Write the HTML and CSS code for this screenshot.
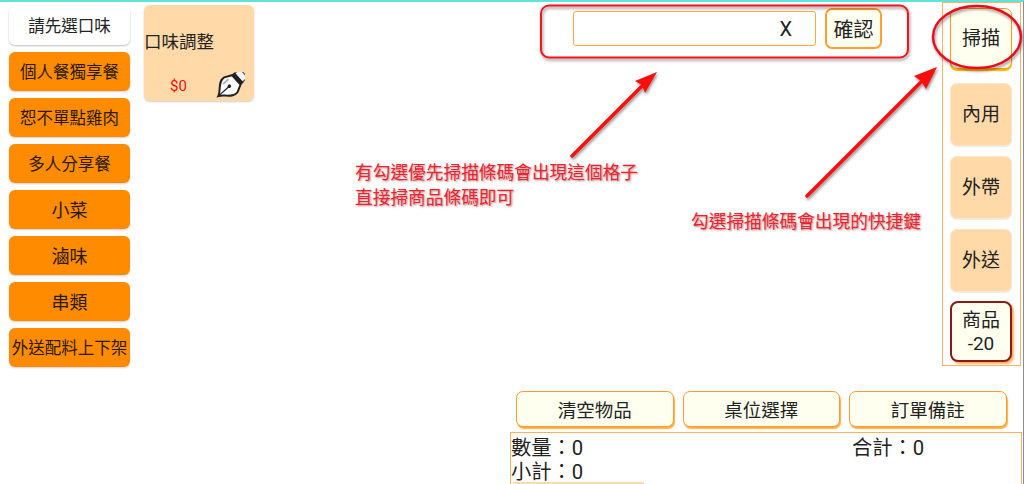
FILE: index.html
```html
<!DOCTYPE html>
<html lang="zh-Hant">
<head>
<meta charset="utf-8">
<title>點餐</title>
<link rel="stylesheet" href="styles.css">
</head>
<body>
<div class="page">
  <nav class="categories">
    <button class="cat cat-active">請先選口味</button>
    <button class="cat">個人餐獨享餐</button>
    <button class="cat">恕不單點雞肉</button>
    <button class="cat">多人分享餐</button>
    <button class="cat cat-big">小菜</button>
    <button class="cat cat-big">滷味</button>
    <button class="cat cat-big">串類</button>
    <button class="cat">外送配料上下架</button>
  </nav>

  <section class="products">
    <div class="card">
      <div class="card-name">口味調整</div>
      <div class="card-foot">
        <span class="card-price">$0</span>
        <svg class="pen" viewBox="0 0 30 28" width="30" height="28" aria-hidden="true">
          <g transform="translate(19 10) rotate(48) scale(1.05)">
            <rect x="-5.5" y="-12.5" width="11" height="7" rx="2" fill="#f4f4f4" stroke="#555" stroke-width="1.1"/>
            <rect x="-6.5" y="-6.5" width="13" height="3.5" fill="#222"/>
            <path d="M0 20 C-2 15 -11 11 -9.5 4 L-6 -3 L6 -3 L9.5 4 C11 11 2 15 0 20 Z" fill="#fff" stroke="#222" stroke-width="1.9"/>
            <path d="M0 19 L0 7" stroke="#222" stroke-width="1.2"/>
            <circle cx="0" cy="6" r="1.7" fill="#222"/>
            <path d="M-5.5 2 L-5.5 9" stroke="#aaa" stroke-width="1.6"/>
          </g>
        </svg>
      </div>
    </div>
  </section>

  <main class="main">
    <div class="top">
      <div class="scan">
        <div class="scan-input"><span class="scan-clear">X</span></div>
        <button class="scan-ok">確認</button>
      </div>
      <aside class="side">
        <button class="side-btn side-scan">掃描</button>
        <button class="side-btn">內用</button>
        <button class="side-btn">外帶</button>
        <button class="side-btn">外送</button>
        <button class="side-btn side-goods">商品<br>-20</button>
      </aside>
    </div>
    <div class="bottom">
      <div class="actions">
        <button class="action">清空物品</button>
        <button class="action">桌位選擇</button>
        <button class="action">訂單備註</button>
      </div>
      <div class="summary">
        <div class="summary-row"><span class="summary-qty">數量：0</span><span>合計：0</span></div>
        <div>小計：0</div>
        <div class="summary-next"></div>
      </div>
    </div>
  </main>

  <svg class="marks" width="1024" height="484" viewBox="0 0 1024 484" aria-hidden="true">
    <defs>
      <filter id="drop" x="-20%" y="-20%" width="140%" height="140%">
        <feDropShadow dx="1" dy="2" stdDeviation="1.5" flood-color="#000" flood-opacity="0.45"/>
      </filter>
    </defs>
    <g filter="url(#drop)">
      <rect x="541" y="5.5" width="367" height="52" rx="8" fill="none" stroke="#f0141e" stroke-width="2"/>
      <path d="M572 156 L648 80" stroke="#fa0a0a" stroke-width="3.5" stroke-linecap="round"/>
      <path d="M657 72 L635 81 L642 85 L645 93 Z" fill="#fa0a0a"/>
      <path d="M807 196 L928 75" stroke="#fa0a0a" stroke-width="3.5" stroke-linecap="round"/>
      <path d="M937 67 L914 76 L921 81 L926 89 Z" fill="#fa0a0a"/>
      <ellipse cx="977" cy="37" rx="44" ry="31" fill="none" stroke="#e8101c" stroke-width="2.5"/>
    </g>
  </svg>
  <p class="note note-left">有勾選優先掃描條碼會出現這個格子<br>直接掃商品條碼即可</p>
  <p class="note note-right">勾選掃描條碼會出現的快捷鍵</p>
</div>
</body>
</html>
```

FILE: styles.css
```css
* { box-sizing: border-box; }
html, body { margin: 0; padding: 0; background: #fff; }
body {
  font-family: Roboto, "Noto Sans CJK TC", sans-serif;
  color: #222;
}
button {
  font-family: inherit;
  color: inherit;
  padding: 0;
  cursor: pointer;
}
.page {
  position: relative;
  display: flex;
  width: 1024px;
  height: 484px;
  overflow: hidden;
  border-top: 2px solid #62e2dc;
  border-right: 1px solid #8c8c8c;
}

/* categories */
.categories {
  display: flex;
  flex-direction: column;
  gap: 7px;
  width: 121px;
  margin: 4px 0 0 9px;
  flex: none;
}
.cat {
  height: 39px;
  padding-bottom: 2px;
  border: 0;
  border-radius: 6px;
  background: #ff8c00;
  font-size: 16.5px;
  color: #2a1a05;
  white-space: nowrap;
  box-shadow: 0 1px 2px rgba(0, 0, 0, 0.2);
}
.cat-big { font-size: 18px; }
.cat-active {
  background: #fff;
  color: #222;
  box-shadow: 0 1px 2px rgba(0, 0, 0, 0.25);
}

/* product card */
.products {
  flex: none;
  margin: 3px 0 0 14px;
}
.card {
  display: flex;
  flex-direction: column;
  justify-content: flex-end;
  width: 110px;
  height: 96px;
  border-radius: 6px;
  background: #ffdaa8;
  box-shadow: 0 1px 2px rgba(0, 0, 0, 0.2);
}
.card-name {
  font-size: 17.5px;
  line-height: 24px;
  margin-bottom: 18px;
}
.card-foot {
  display: flex;
  align-items: flex-end;
  justify-content: space-between;
  padding: 0 9px 1px 26px;
  height: 29px;
}
.card-price {
  color: #f01010;
  font-size: 15px;
  line-height: 20px;
  padding-bottom: 4px;
}
.pen { display: block; }

/* main */
.main {
  flex: 1;
  display: flex;
  flex-direction: column;
  min-width: 0;
}
.top {
  display: flex;
  justify-content: flex-end;
  align-items: flex-start;
  flex: none;
  height: 389px;
}
.scan {
  display: flex;
  align-items: center;
  gap: 9px;
  margin: 6px 60px 0 0;
}
.scan-input {
  display: flex;
  align-items: center;
  justify-content: flex-end;
  width: 243px;
  height: 35px;
  padding-right: 23px;
  border: 1px solid #ffa940;
  border-radius: 3px;
  background: #fff;
}
.scan-clear { font-size: 20px; color: #222; }
.scan-ok {
  width: 57px;
  height: 41px;
  border: 2px solid #ffa030;
  border-radius: 7px;
  background: #fffff0;
  font-size: 20px;
}
.side {
  display: flex;
  flex-direction: column;
  align-items: center;
  width: 79px;
  height: 364px;
  margin-right: 2px;
  padding: 5px 1px 0 0;
  gap: 10px;
  border: 1px solid #ffb060;
  flex: none;
}
.side-btn {
  width: 62px;
  height: 63px;
  border: 1px solid #ffe6c8;
  border-radius: 7px;
  background: #ffdaa8;
  font-size: 19px;
  line-height: 23px;
  flex: none;
  box-shadow: 0 1px 1px rgba(0, 0, 0, 0.08);
}
.side-scan {
  height: 61px;
  margin-bottom: 4px;
  border: 1px solid #ff9a1e;
  background: #fffff0;
  box-shadow: 0 2px 1px #ffb400;
}
.side-goods {
  height: 61px;
  margin-top: -1px;
  border: 2px solid #8b1a14;
  border-radius: 8px;
  background: #fffff0;
  box-shadow: 2px 2px 2px #ffb060;
}

/* bottom */
.bottom {
  margin-left: 256px;
  width: 512px;
}
.actions {
  display: flex;
  gap: 9px;
  padding-left: 6px;
}
.action {
  width: 157.5px;
  height: 36px;
  border: 1px solid #ff9a30;
  border-radius: 7px;
  background: #fffff0;
  font-size: 18.5px;
  box-shadow: 1px 2px 1px #ffb040;
}
.summary {
  height: 70px;
  margin-top: 5px;
  padding-top: 3px;
  border: 1px solid #ffb060;
  font-size: 20.3px;
  line-height: 24px;
  color: #222;
}
.summary-row { display: flex; }
.summary-qty { width: 341px; }
.summary-next {
  width: 131px;
  height: 6px;
  margin: -2px 0 0 2px;
  background: #ffdaa8;
}

/* annotations laid over the screenshot */
.marks {
  position: absolute;
  left: 0;
  top: -2px;
  pointer-events: none;
}
.note {
  position: absolute;
  margin: 0;
  color: #ea2430;
  font-size: 17.7px;
  line-height: 25px;
  white-space: nowrap;
  text-shadow: 1px 1px 2px rgba(120, 0, 0, 0.5);
}
.note-left { left: 355px; top: 159px; }
.note-right { left: 691px; top: 208px; }
```
